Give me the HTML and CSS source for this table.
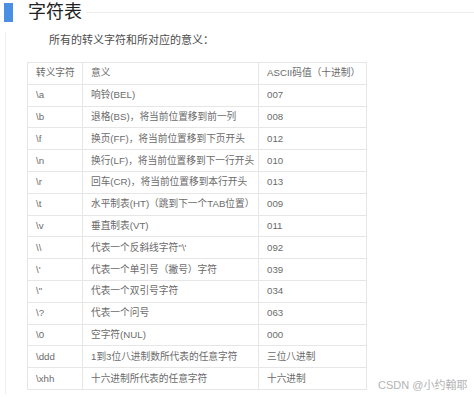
FILE: index.html
```html
<!DOCTYPE html>
<html>
    <head>
        <meta charset="utf-8">
        <title>字符表</title>
        <link rel="stylesheet" href="styles.css">
    </head>
    <body>
        <div class="title-row">
            <span class="mark"></span>
            <h2>字符表</h2>
            <span class="rule"></span>
        </div>
        <div class="content">
            <p class="intro">所有的转义字符和所对应的意义：</p>
            <table class="esc-table">
                <colgroup>
                    <col class="c1">
                    <col class="c2">
                    <col class="c3">
                </colgroup>
                <tr><td>转义字符</td><td>意义</td><td>ASCII码值（十进制）</td></tr>
                <tr><td>\a</td><td>响铃(BEL)</td><td>007</td></tr>
                <tr><td>\b</td><td>退格(BS)，将当前位置移到前一列</td><td>008</td></tr>
                <tr><td>\f</td><td>换页(FF)，将当前位置移到下页开头</td><td>012</td></tr>
                <tr><td>\n</td><td>换行(LF)，将当前位置移到下一行开头</td><td>010</td></tr>
                <tr><td>\r</td><td>回车(CR)，将当前位置移到本行开头</td><td>013</td></tr>
                <tr><td>\t</td><td>水平制表(HT)（跳到下一个TAB位置）</td><td>009</td></tr>
                <tr><td>\v</td><td>垂直制表(VT)</td><td>011</td></tr>
                <tr><td>\\</td><td>代表一个反斜线字符''\'</td><td>092</td></tr>
                <tr><td>\'</td><td>代表一个单引号（撇号）字符</td><td>039</td></tr>
                <tr><td>\"</td><td>代表一个双引号字符</td><td>034</td></tr>
                <tr><td>\?</td><td>代表一个问号</td><td>063</td></tr>
                <tr><td>\0</td><td>空字符(NUL)</td><td>000</td></tr>
                <tr><td>\ddd</td><td>1到3位八进制数所代表的任意字符</td><td>三位八进制</td></tr>
                <tr><td>\xhh</td><td>十六进制所代表的任意字符</td><td>十六进制</td></tr>
            </table>
        </div>
        <div class="watermark">CSDN @小约翰耶</div>
    </body>
</html>
```

FILE: styles.css
```css
body{
    margin: 0;
    background-color: #fff;
    font-family: "Liberation Sans", "Noto Sans CJK SC", sans-serif;
    color: #4d4d4d;
}
.title-row{
    display: flex;
    align-items: center;
    height: 19px;
    padding-top: 3px;
    padding-left: 4px;
}
.mark{
    width: 9px;
    height: 19px;
    background-color: #4a8fe3;
}
h2{
    margin: 0 0 0 15px;
    font-size: 18px;
    line-height: 19px;
    font-weight: 400;
    color: #222;
}
.rule{
    flex: 1;
    height: 1px;
    margin-left: 5px;
    background-color: #ececec;
}
.content{
    margin: 3px 0 0 5px;
    border-left: 1px solid #eeeeee;
    padding-bottom: 4px;
}
.intro{
    margin: 10px 0 0 43px;
    font-size: 11px;
    line-height: 16px;
    color: #4d4d4d;
}
.esc-table{
    margin: 14px 0 0 21px;
    border-collapse: collapse;
    table-layout: fixed;
    width: 339px;
    font-size: 9.7px;
    color: #6b6b6b;
}
.c1{
    width: 55px;
}
.c2{
    width: 176px;
}
.c3{
    width: 108px;
}
.esc-table td{
    border: 1px solid #e6e6e6;
    height: 20.8px;
    padding: 0 0 0 8px;
    line-height: 12px;
    white-space: nowrap;
    overflow: visible;
}
.watermark{
    position: absolute;
    left: 378px;
    top: 378px;
    font-size: 11px;
    line-height: 14px;
    color: #b3b3b3;
}
```
